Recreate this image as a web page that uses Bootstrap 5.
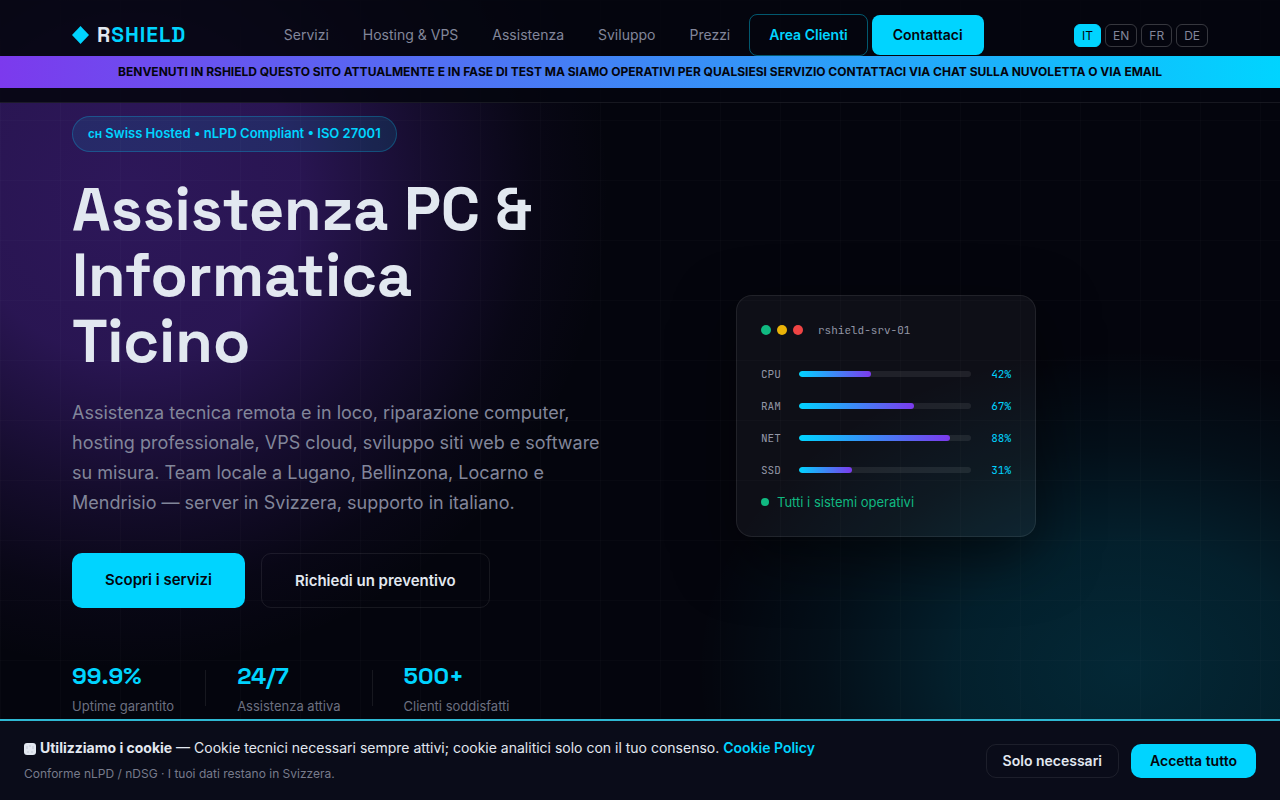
<!DOCTYPE html>
<html lang="it">
<head>
<meta charset="utf-8">
<meta name="viewport" content="width=device-width, initial-scale=1">
<title>RSHIELD — Assistenza PC &amp; Informatica Ticino</title>
<link href="https://cdn.jsdelivr.net/npm/bootstrap@5.3.0/dist/css/bootstrap.min.css" rel="stylesheet">
<style>
:root{--cy:#00d4ff;--vi:#7c3aed;--ink:#04050d;--txt:#e2e8f0;--dim:#82869a;--line:rgba(255,255,255,.08)}
body{font-family:Inter,"Liberation Sans",sans-serif;color:var(--txt);background-color:var(--ink);
 background-image:
  linear-gradient(rgba(255,255,255,.016) 1px,transparent 1px),
  linear-gradient(90deg,rgba(255,255,255,.016) 1px,transparent 1px),
  radial-gradient(circle 480px at 130px 190px,rgba(124,58,237,.34) 0,rgba(124,58,237,.31) 35%,rgba(124,58,237,.15) 62%,rgba(124,58,237,.04) 84%,transparent 100%),
  radial-gradient(ellipse 430px 320px at 88% 670px,rgba(0,212,255,.17) 0,rgba(0,212,255,.13) 40%,rgba(0,212,255,.05) 70%,transparent 100%);
 background-size:60px 60px,60px 60px,auto,auto}
a{text-decoration:none}
.wrap{max-width:1200px;padding:0 32px}
.site-head{background:rgba(5,6,15,.88);border-bottom:1px solid var(--line)}
.top-row{padding-top:14px;height:56px}
.logo{font-family:"Space Grotesk",Inter,sans-serif;font-weight:700;font-size:21px;line-height:24px;letter-spacing:1px;color:var(--cy)}
.logo span{color:var(--txt)}
.menu{gap:4px;font-size:14px;line-height:24px}
.menu .nav-link{padding:8px 15px;color:var(--dim)}
.menu .btn{font-size:14px;font-weight:600;line-height:24px;border-radius:8px;padding:8px 19px}
.btn-cy,.btn-cy:hover{background:var(--cy);color:var(--ink);border:0}
.menu .btn-cy{padding:8px 21px}
.btn-out,.btn-out:hover{color:var(--cy);border:1px solid rgba(0,212,255,.4)}
.btn-ghost,.btn-ghost:hover{color:var(--txt);border:1px solid var(--line)}
.langs{gap:4px}
.langs .btn{font-size:12px;line-height:15px;padding:3px 7px;border-radius:6px;color:var(--dim);border:1px solid rgba(255,255,255,.2)}
.langs .btn.active{background:var(--cy);border-color:var(--cy);color:var(--ink)}
.notice{background:linear-gradient(90deg,var(--vi),var(--cy));color:var(--ink);font-size:12px;font-weight:700;line-height:16px;padding:8px 16px}
.head-foot{height:14px}
.hero{padding-top:13px;padding-bottom:86px}
.pill{font-size:13px;line-height:20px;font-weight:600;color:var(--cy);padding:6px 15px 7px;border:1px solid rgba(0,212,255,.25);background:rgba(0,212,255,.1);border-radius:50px}
.pill small{font-size:12px}
.hero h1{font-family:"Space Grotesk",Inter,sans-serif;font-size:61px;line-height:66px;font-weight:700;margin:24px 0}
.intro{font-size:18px;line-height:30px;color:var(--dim);max-width:540px;margin-bottom:35px}
.cta{gap:16px}
.cta .btn{font-size:15px;font-weight:600;line-height:23px;padding:15px 33px;border-radius:10px}
.stats{margin-top:52px}
.stats .sep{width:1px;height:36px;background:var(--line);margin:0 31px}
.stats strong{display:block;font-family:"Space Grotesk",Inter,sans-serif;font-size:24px;line-height:32px;color:var(--cy)}
.stats span{display:block;font-size:13px;line-height:20px;color:#6c7080;margin-top:4px}
.srv-col{padding-left:96px}
.srv{width:300px;max-width:100%;padding:24px;border:1px solid rgba(255,255,255,.08);border-radius:16px;background:rgba(255,255,255,.045);box-shadow:0 20px 60px rgba(0,0,0,.5)}
.mono{font-family:"JetBrains Mono","DejaVu Sans Mono",monospace;font-size:11px;line-height:20px;color:#9296a5}
.dots{gap:6px;margin-right:15px}
.dot{width:10px;height:10px;border-radius:50%}
.dot.sm-dot{width:8px;height:8px}
.g{background:#10b981}.y{background:#eab308}.r{background:#ef4444}
.meters{margin-top:24px;gap:12px}
.meters .lbl{width:38px}
.meters .pct{width:40px;text-align:right;color:var(--cy)}
.meters .progress{height:6px;border-radius:3px;background:rgba(255,255,255,.08)}
.meters .progress-bar{border-radius:3px;background:linear-gradient(90deg,var(--cy),var(--vi))}
.ok{font-size:13px;line-height:20px;color:#10b981;margin-top:12px}
.cookie{background:#0a0c19;border-top:2px solid #2fb9d3;padding:16px 24px}
.cookie p{font-size:14px;line-height:22px;margin:0}
.cookie .sub{font-size:12px;line-height:20px;color:#777b8b;margin-top:5px}
.cookie .btn{font-size:14px;font-weight:600;line-height:20px;border-radius:10px;padding:6px 16px}
.cookie .btn-cy{padding:7px 19px}
.cookie a{color:var(--cy);font-weight:600}
</style>
</head>
<body>
<header class="site-head">
  <div class="container-fluid wrap top-row d-flex align-items-center justify-content-between">
    <a href="#" class="logo d-flex align-items-center"><svg width="17" height="18" viewBox="0 0 17 18" class="me-2" aria-hidden="true"><path d="M8.500 0 17 9 8.500 18 0 9Z" fill="#00d4ff"/></svg><span>R</span>SHIELD</a>
    <nav class="nav menu flex-nowrap align-items-center me-2">
      <a class="nav-link" href="#">Servizi</a>
      <a class="nav-link" href="#">Hosting &amp; VPS</a>
      <a class="nav-link" href="#">Assistenza</a>
      <a class="nav-link" href="#">Sviluppo</a>
      <a class="nav-link" href="#">Prezzi</a>
      <a class="btn btn-out" href="#">Area Clienti</a>
      <a class="btn btn-cy" href="#">Contattaci</a>
    </nav>
    <div class="langs d-flex">
      <button type="button" class="btn active">IT</button>
      <button type="button" class="btn">EN</button>
      <button type="button" class="btn">FR</button>
      <button type="button" class="btn">DE</button>
    </div>
  </div>
  <div class="notice text-center">BENVENUTI IN RSHIELD QUESTO SITO ATTUALMENTE E IN FASE DI TEST MA SIAMO OPERATIVI PER QUALSIESI SERVIZIO CONTATTACI VIA CHAT SULLA NUVOLETTA O VIA EMAIL</div>
  <div class="head-foot"></div>
</header>

<main class="container-fluid wrap hero">
  <div class="row g-0 align-items-center">
    <div class="col-lg-6">
      <div class="d-flex"><div class="pill"><small>ᴄʜ</small> Swiss Hosted • nLPD Compliant • ISO 27001</div></div>
      <h1>Assistenza PC &amp;<br>Informatica<br>Ticino</h1>
      <p class="intro">Assistenza tecnica remota e in loco, riparazione computer, hosting professionale, VPS cloud, sviluppo siti web e software su misura. Team locale a Lugano, Bellinzona, Locarno e Mendrisio — server in Svizzera, supporto in italiano.</p>
      <div class="cta d-flex">
        <a class="btn btn-cy" href="#">Scopri i servizi</a>
        <a class="btn btn-ghost" href="#">Richiedi un preventivo</a>
      </div>
      <div class="stats d-flex align-items-center">
        <div><strong>99.9%</strong><span>Uptime garantito</span></div>
        <div class="sep"></div>
        <div><strong>24/7</strong><span>Assistenza attiva</span></div>
        <div class="sep"></div>
        <div><strong>500+</strong><span>Clienti soddisfatti</span></div>
      </div>
    </div>
    <div class="col-lg-6 srv-col">
      <section class="srv">
        <div class="d-flex align-items-center">
          <div class="dots d-flex"><i class="dot g"></i><i class="dot y"></i><i class="dot r"></i></div>
          <span class="mono">rshield-srv-01</span>
        </div>
        <div class="meters mono d-flex flex-column">
          <div class="d-flex align-items-center"><span class="lbl">CPU</span><div class="progress flex-grow-1"><div class="progress-bar" style="width:42%"></div></div><span class="pct">42%</span></div>
          <div class="d-flex align-items-center"><span class="lbl">RAM</span><div class="progress flex-grow-1"><div class="progress-bar" style="width:67%"></div></div><span class="pct">67%</span></div>
          <div class="d-flex align-items-center"><span class="lbl">NET</span><div class="progress flex-grow-1"><div class="progress-bar" style="width:88%"></div></div><span class="pct">88%</span></div>
          <div class="d-flex align-items-center"><span class="lbl">SSD</span><div class="progress flex-grow-1"><div class="progress-bar" style="width:31%"></div></div><span class="pct">31%</span></div>
        </div>
        <div class="ok d-flex align-items-center"><i class="dot sm-dot g me-2"></i>Tutti i sistemi operativi</div>
      </section>
    </div>
  </div>
</main>

<aside class="cookie fixed-bottom d-flex align-items-center justify-content-between">
  <div>
    <p><svg width="12" height="12" viewBox="0 0 12 12" class="me-1" aria-hidden="true"><rect width="12" height="12" rx="3" fill="#e2e8f0"/><path d="M3 3v3M6 2v2M9 3v3M4 8v2M8 8v2" stroke="#c4c9d6"/></svg><strong>Utilizziamo i cookie</strong> — Cookie tecnici necessari sempre attivi; cookie analitici solo con il tuo consenso. <a href="#">Cookie Policy</a></p>
    <p class="sub">Conforme nLPD / nDSG · I tuoi dati restano in Svizzera.</p>
  </div>
  <div class="d-flex gap-2">
    <button type="button" class="btn btn-ghost me-1">Solo necessari</button>
    <button type="button" class="btn btn-cy">Accetta tutto</button>
  </div>
</aside>
<script src="https://cdn.jsdelivr.net/npm/bootstrap@5.3.0/dist/js/bootstrap.bundle.min.js"></script>
</body>
</html>
